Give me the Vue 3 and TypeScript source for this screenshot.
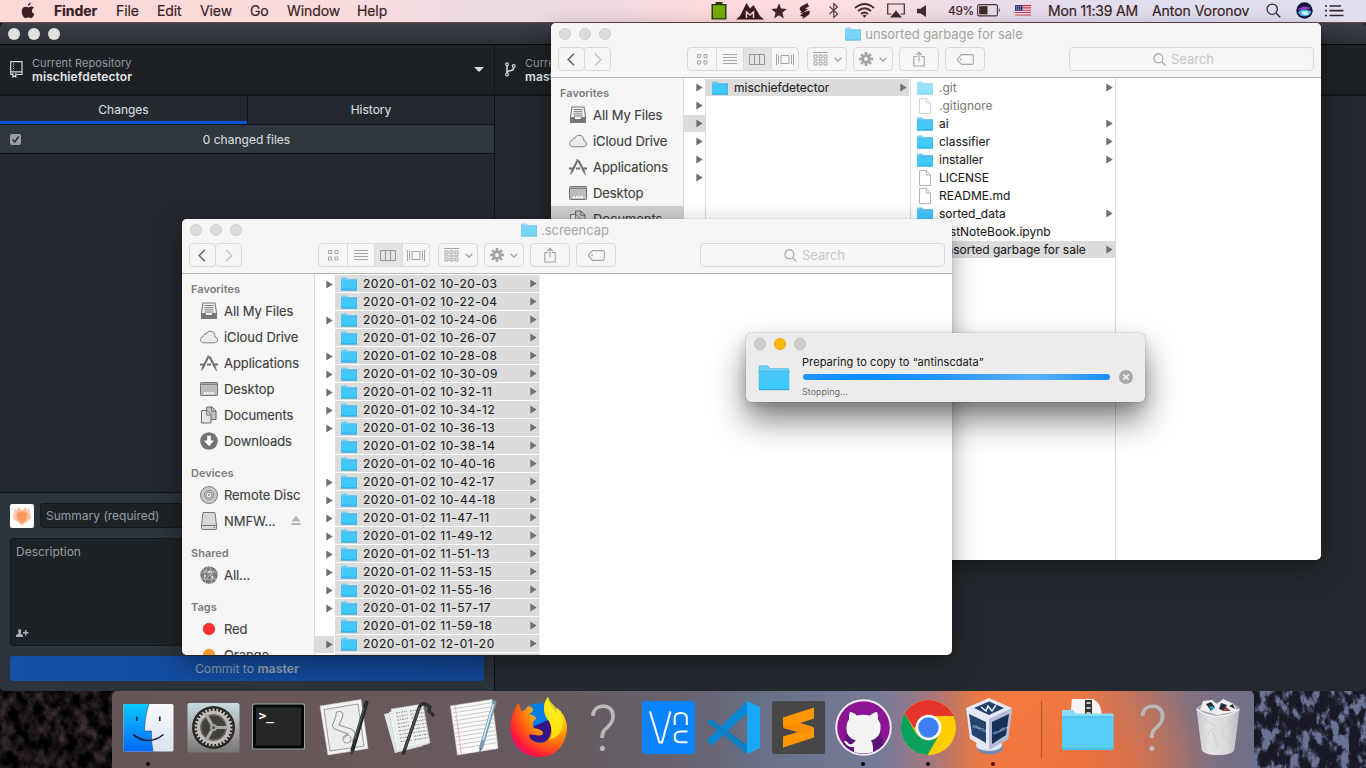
<script setup lang="ts">
type Side = { kind: 'head' | 'item'; label: string; icon?: string; selected?: boolean; eject?: boolean }
type Row = { label?: string; icon?: 'folder' | 'file'; arrow?: boolean; selected?: boolean; dim?: boolean }
type Column = { cls: string; rows: Row[] }
type FinderWindow = { id: string; title: string; side: Side[]; columns: Column[] }

const menus = ['Finder', 'File', 'Edit', 'View', 'Go', 'Window', 'Help']

const sidebar = (selected: string): Side[] => [
  { kind: 'head', label: 'Favorites' },
  { kind: 'item', label: 'All My Files', icon: 'allfiles' },
  { kind: 'item', label: 'iCloud Drive', icon: 'cloud' },
  { kind: 'item', label: 'Applications', icon: 'apps' },
  { kind: 'item', label: 'Desktop', icon: 'desktop' },
  { kind: 'item', label: 'Documents', icon: 'docs', selected: selected === 'Documents' },
  { kind: 'item', label: 'Downloads', icon: 'downloads' },
  { kind: 'head', label: 'Devices' },
  { kind: 'item', label: 'Remote Disc', icon: 'disc' },
  { kind: 'item', label: 'NMFW...', icon: 'drive', eject: true },
  { kind: 'head', label: 'Shared' },
  { kind: 'item', label: 'All...', icon: 'globe' },
  { kind: 'head', label: 'Tags' },
  { kind: 'item', label: 'Red', icon: 'red' },
  { kind: 'item', label: 'Orange', icon: 'orange' },
]

const stamps = [
  '10-20-03', '10-22-04', '10-24-06', '10-26-07', '10-28-08', '10-30-09', '10-32-11',
  '10-34-12', '10-36-13', '10-38-14', '10-40-16', '10-42-17', '10-44-18', '11-47-11',
  '11-49-12', '11-51-13', '11-53-15', '11-55-16', '11-57-17', '11-59-18', '12-01-20',
]
const arrowRows = [0, 2, 4, 5, 6, 7, 8, 11, 12, 13, 14, 15, 16, 17, 18, 20]

const windows: FinderWindow[] = [
  {
    id: 'back',
    title: 'unsorted garbage for sale',
    side: sidebar('Documents'),
    columns: [
      { cls: 'sliver', rows: [0, 1, 2, 3, 4, 5].map((i) => ({ arrow: true, selected: i === 2 })) },
      { cls: 'mid', rows: [{ label: 'mischiefdetector', icon: 'folder', arrow: true, selected: true }] },
      {
        cls: 'wide',
        rows: [
          { label: '.git', icon: 'folder', arrow: true, dim: true },
          { label: '.gitignore', icon: 'file', dim: true },
          { label: 'ai', icon: 'folder', arrow: true },
          { label: 'classifier', icon: 'folder', arrow: true },
          { label: 'installer', icon: 'folder', arrow: true },
          { label: 'LICENSE', icon: 'file' },
          { label: 'README.md', icon: 'file' },
          { label: 'sorted_data', icon: 'folder', arrow: true },
          { label: 'testNoteBook.ipynb', icon: 'file' },
          { label: 'unsorted garbage for sale', icon: 'folder', arrow: true, selected: true },
        ],
      },
    ],
  },
  {
    id: 'front',
    title: '.screencap',
    side: sidebar(''),
    columns: [
      { cls: 'sliver low', rows: stamps.map((_, i) => ({ arrow: arrowRows.includes(i), selected: i === 20 })) },
      {
        cls: 'mid',
        rows: [
          ...stamps.map((s) => ({ label: `2020-01-02 ${s}`, icon: 'folder' as const, arrow: true, selected: true })),
          { icon: 'folder', selected: true },
        ],
      },
    ],
  },
]

const teeth = Array.from({ length: 30 }, (_, i) => i * 12)
const cogs = Array.from({ length: 8 }, (_, i) => i * 45)
const ruled = Array.from({ length: 11 }, (_, i) => i * 4)
</script>

<template>
  <div class="desktop">
    <svg class="defs" width="0" height="0">
      <defs>
        <linearGradient id="gf" x1="0" y1="0" x2="0" y2="1"><stop offset="0" stop-color="#4bc6f8" /><stop offset="1" stop-color="#3bcaff" /></linearGradient>
        <symbol id="folder" viewBox="0 0 16 14">
          <path d="M0 1.2 Q0 .4 .8 .4 H5.4 L6.8 1.9 H16 V13 H0Z" fill="#6fcdf2" />
          <path d="M0 3 H16 V13.4 H0Z" fill="url(#gf)" />
          <path d="M0 3.2H16" stroke="#4fb4e0" stroke-width=".6" />
          <path d="M0 13H16" stroke="#2ba3d4" stroke-width="1" />
          <path d="M15.7 3V13" stroke="#35aede" stroke-width=".6" />
        </symbol>
        <symbol id="file" viewBox="0 0 16 16">
          <path d="M2.5 .5H9.5L13.5 4.8V15.5H2.5Z" fill="#fff" stroke="#b4b4b4" />
          <path d="M9.3 .6V5H13.4" fill="#f4f4f4" stroke="#b4b4b4" />
        </symbol>
        <symbol id="allfiles" viewBox="0 0 18 18">
          <path d="M3 1H15L16.5 11V16.5H1.500V11Z" fill="#f3f3f3" stroke="#777" stroke-width="1.1" />
          <path d="M4.500 3.500H13.500M4.500 5.700H13.500M4.500 7.900H13.500M4.500 10H13.500" stroke="#777" />
          <path d="M1.500 11H5.500L6.500 13H11.500L12.500 11H16.500V16.500H1.500Z" fill="#777" />
        </symbol>
        <symbol id="cloud" viewBox="0 0 18 18">
          <path d="M4.200 14.800H14.200C16.200 14.800 17.500 13.500 17.500 11.800 17.500 10.200 16.400 9.100 15 8.900 15.100 5.700 13 3.200 10.200 3.200 8.100 3.200 6.500 4.500 5.800 6.300 4.400 6 3.100 7 3.100 8.600 1.500 8.900 .5 10.200 .5 11.700 .5 13.500 2 14.800 4.200 14.800Z" fill="#ebebeb" stroke="#7c7c7c" />
        </symbol>
        <symbol id="apps" viewBox="0 0 18 18">
          <path d="M8.200 3L2.500 14.500M9.700 3L15.500 14.500" stroke="#6e6e6e" stroke-width="2" />
          <path d="M7.500 1.500L10.500 4" stroke="#6e6e6e" stroke-width="1.500" />
          <path d="M0 10.500H5M7 10.500H11M13.500 10.500H18" stroke="#6e6e6e" stroke-width="1.800" />
          <path d="M2.300 14.500L1.500 16.500M15.500 14.500L16.500 16.700" stroke="#6e6e6e" stroke-width="1.200" />
        </symbol>
        <symbol id="desktop" viewBox="0 0 18 18">
          <rect x=".5" y="2.500" width="17" height="13" rx=".8" fill="#bcbcbc" stroke="#747474" />
          <path d="M1 4.300H17" stroke="#747474" /><path d="M4 13.300H14" stroke="#fff" stroke-width="2" stroke-dasharray="2 .7" />
        </symbol>
        <symbol id="docs" viewBox="0 0 18 18">
          <path d="M6.500 1H12L16 5V13.500H6.500Z" fill="#c2c2c2" stroke="#6c6c6c" /><path d="M11.700 1V5.300H16" fill="none" stroke="#6c6c6c" />
          <path d="M1.500 4.500H7L11 8.700V17H1.500Z" fill="#e5e5e5" stroke="#6c6c6c" /><path d="M6.700 4.500V9H11" fill="none" stroke="#6c6c6c" />
        </symbol>
        <symbol id="downloads" viewBox="0 0 18 18">
          <circle cx="9" cy="9" r="8.800" fill="#727272" /><path d="M7.200 3.700H10.800V8.500H14L9 14.200L4 8.500H7.200Z" fill="#fff" />
        </symbol>
        <symbol id="disc" viewBox="0 0 18 18">
          <circle cx="9" cy="9" r="8.500" fill="#c9c9c9" stroke="#7b7b7b" /><circle cx="9" cy="9" r="4.800" fill="none" stroke="#959595" /><circle cx="9" cy="9" r="3" fill="#eee" stroke="#858585" /><circle cx="9" cy="9" r="1" fill="#888" />
        </symbol>
        <symbol id="drive" viewBox="0 0 18 18">
          <path d="M3 .5H15L16.500 13V16.500Q16.500 17.500 15.500 17.500H2.500Q1.500 17.500 1.500 16.500V13Z" fill="#d8d8d8" stroke="#777" /><path d="M1.700 13.500H16.300" stroke="#777" /><circle cx="14.300" cy="15.500" r=".7" fill="#666" />
        </symbol>
        <symbol id="globe" viewBox="0 0 18 18">
          <circle cx="9" cy="9" r="8.700" fill="#777" /><path d="M1.500 7Q9 3 16.500 7M1.500 12Q8 15 16 12M9.500 .5Q14 8 11 17M8 .5Q2 8 6 17M3 3L15 14M15 4L6 13" fill="none" stroke="#d0d0d0" stroke-width=".7" />
          <circle cx="9.500" cy="6" r="1.200" fill="#eee" /><circle cx="5" cy="10" r="1" fill="#eee" /><circle cx="12.500" cy="11" r="1" fill="#eee" />
        </symbol>
        <symbol id="red" viewBox="0 0 18 18"><circle cx="9" cy="9" r="5.800" fill="#ff3032" stroke="#df2326" stroke-width=".7" /></symbol>
        <symbol id="orange" viewBox="0 0 18 18"><circle cx="9" cy="9" r="5.800" fill="#ff9d2c" stroke="#e5861f" stroke-width=".7" /></symbol>
        <symbol id="glass" viewBox="0 0 14 14"><circle cx="5.800" cy="5.800" r="4.800" fill="none" stroke="currentColor" stroke-width="1.200" /><path d="M9.300 9.300L13.300 13.300" stroke="currentColor" stroke-width="1.400" /></symbol>
        <filter id="rockL" x="0" y="0" width="100%" height="100%" color-interpolation-filters="sRGB">
          <feTurbulence type="fractalNoise" baseFrequency=".09 .07" numOctaves="4" seed="7" />
          <feColorMatrix values=".55 0 0 0 -.19  .42 0 0 0 -.145  .42 0 0 0 -.14  0 0 0 0 1" />
        </filter>
        <filter id="rockR" x="0" y="0" width="100%" height="100%" color-interpolation-filters="sRGB">
          <feTurbulence type="fractalNoise" baseFrequency=".1 .06" numOctaves="5" seed="12" />
          <feColorMatrix values="5 0 0 0 -2.200  5 0 0 0 -2.200  5 0 0 0 -2.200  0 0 0 0 1" />
          <feComponentTransfer>
            <feFuncR type="table" tableValues=".1 .14 .28 .42" /><feFuncG type="table" tableValues=".1 .15 .3 .45" /><feFuncB type="table" tableValues=".15 .21 .4 .58" />
          </feComponentTransfer>
        </filter>
      </defs>
    </svg>

    <svg class="wallpaper" viewBox="0 0 1366 88">
      <rect width="1366" height="88" fill="#17161d" />
      <rect width="130" height="88" filter="url(#rockL)" />
      <rect x="1240" width="126" height="88" filter="url(#rockR)" />
    </svg>

    <header class="menubar">
      <svg class="apple" viewBox="0 0 14 17"><path d="M9.700 .5C9.800 2.300 8.400 3.900 6.900 3.900 6.700 2.300 8.100 .8 9.700 .5ZM12.900 5.700C11.500 6.500 10.900 7.600 11 8.900 11.100 10.400 12 11.500 13.300 12 12.700 13.900 11.300 16.200 9.900 16.200 8.900 16.200 8.500 15.600 7.300 15.600 6.100 15.600 5.600 16.200 4.700 16.200 2.900 16.200 .7 12.700 .7 9.500 .7 6.500 2.500 4.700 4.500 4.700 5.700 4.700 6.500 5.400 7.300 5.400 8.100 5.400 9 4.600 10.500 4.600 11.500 4.600 12.400 5 12.900 5.700Z" fill="#3b2022" /></svg>
      <nav class="menus"><span v-for="m in menus" :key="m">{{ m }}</span></nav>
      <div class="status">
        <svg width="16" height="18" viewBox="0 0 16 18"><path d="M4.500 0H11.500V2H15.500V17.500H.5V2H4.500Z" fill="#25370a" /><rect x="2" y="3.300" width="12" height="13" fill="#76ad00" /></svg>
        <svg width="28" height="18" viewBox="0 0 28 18"><path d="M0 17.500L4 14 10.500 1 14 6.500 17.500 3 24 14 28 17.500Z" fill="#3a1a1c" /><path d="M10.500 16V10L14 13 17.500 10V16" fill="none" stroke="#f5d5d5" stroke-width="1.500" /></svg>
        <svg width="16" height="16" viewBox="0 0 16 16"><path d="M8 .3L10.100 5.600 15.800 6 11.400 9.700 12.900 15.400 8 12.200 3.100 15.400 4.600 9.700 .2 6 5.900 5.600Z" fill="#402628" /></svg>
        <svg width="13" height="16" viewBox="0 0 13 16"><path d="M9.500 0L3 3.500Q0 6 3.500 8.500L2 10.500 6 9 10 6 7 5.500 11 3.500ZM5 9.500L11.500 7.500Q12.500 11 9 13L4.500 16 5 13.500 2 13Z" fill="#3b2022" /></svg>
        <svg width="12" height="17" viewBox="0 0 12 17"><path d="M1.500 4.500L9.500 12 5.800 15.500V1.500L9.500 5 1.500 12" fill="none" stroke="#50383b" stroke-width="1.100" /></svg>
        <svg width="21" height="15" viewBox="0 0 21 15"><path d="M1 5Q10.500 -3 20 5M4 8Q10.500 2.500 17 8M7 11Q10.500 8 14 11" fill="none" stroke="#402a2d" stroke-width="1.800" /><path d="M8.500 12.500L10.500 14.800 12.500 12.500Q10.500 11 8.500 12.500" fill="#402a2d" /></svg>
        <svg width="18" height="15" viewBox="0 0 18 15"><path d="M4.500 11H.7V1H17.300V11H13.500" fill="none" stroke="#402a2d" stroke-width="1.200" /><path d="M9 7.500L15 14.500H3Z" fill="#402a2d" /></svg>
        <svg width="10" height="12" viewBox="0 0 10 12"><path d="M0 3.800H3.500L9 0V12L3.500 8.200H0Z" fill="#402a2d" /></svg>
        <span class="pct">49%</span>
        <svg width="24" height="13" viewBox="0 0 24 13"><rect x=".6" y=".6" width="19.800" height="11.300" rx="1.500" fill="none" stroke="#493436" stroke-width="1.100" /><rect x="2.200" y="2.200" width="8.300" height="8.100" fill="#3e292b" /><path d="M21.800 4Q23.800 6.200 21.800 8.500" fill="#493436" /></svg>
        <svg width="16" height="11" viewBox="0 0 16 11"><rect width="16" height="11" fill="#f6eef2" /><path d="M0 .6H16M0 2.900H16M0 5.200H16M0 7.500H16M0 10H16" stroke="#c92842" stroke-width="1.100" /><rect width="7.500" height="5.800" fill="#3a3d78" /><path d="M1 1.500H7M1 3H7M1 4.500H7" stroke="#c9cae0" stroke-width=".6" stroke-dasharray="1 1" /></svg>
        <span class="clock">Mon 11:39 AM</span>
        <span class="user">Anton Voronov</span>
        <svg width="15" height="15" class="mag"><use href="#glass" /></svg>
        <svg width="17" height="17" viewBox="0 0 17 17"><circle cx="8.500" cy="8.500" r="8.200" fill="#17153e" /><path d="M1.500 8Q7 2 15 6 11 8 8 7.500 5 7.500 1.500 8" fill="#a23ccb" /><path d="M2 10.500Q5 5.500 15 9 15.500 12 11 14 5 15.500 2 10.500" fill="#3fb5ef" /><path d="M5 10Q9 7.500 13.500 11 10 15 6.500 12Z" fill="#d7f2fb" /></svg>
        <svg width="19" height="12" viewBox="0 0 19 12"><path d="M0 1H2M0 5.700H2M0 10.500H2M4.500 1H16M4.500 5.700H18.500M4.500 10.500H18.500" stroke="#35272d" stroke-width="1.700" /></svg>
      </div>
    </header>

    <section class="gh">
      <div class="gh-title"><i /><i /><i /></div>
      <div class="gh-tools">
        <div class="gh-repo">
          <svg width="13" height="17" viewBox="0 0 13 17"><path d="M2.500 13.500H.7V.7H12V13.500H6.500M.7 10.800H12M2.800 12V16L4.300 14.800 5.800 16V12" fill="none" stroke="#d4d8dc" stroke-width="1.200" /><path d="M3.500 2.500V9.500" stroke="#d4d8dc" stroke-dasharray="1 1.200" /></svg>
          <div class="gh-lines"><span>Current Repository</span><b>mischiefdetector</b></div>
          <svg class="caret" width="10" height="5" viewBox="0 0 10 5"><path d="M0 0H10L5 5Z" fill="#d8dde2" /></svg>
        </div>
        <div class="gh-branch">
          <svg width="11" height="15" viewBox="0 0 11 15"><g fill="none" stroke="#cdd2d7" stroke-width="1.200"><circle cx="2" cy="2.300" r="1.400" /><circle cx="2" cy="12.500" r="1.400" /><circle cx="8.700" cy="4" r="1.400" /><path d="M2 4V11M8.700 5.500Q8.700 8.500 4.500 8.800 2 9.500 2 11" stroke-width="1.600" /></g></svg>
          <div class="gh-lines"><span>Current Branch</span><b>master</b></div>
        </div>
      </div>
      <div class="gh-body">
        <div class="gh-left">
          <div class="gh-tabs"><span class="on">Changes</span><span>History</span></div>
          <div class="gh-count">
            <svg width="11" height="11" viewBox="0 0 11 11"><rect width="11" height="11" rx="2" fill="#9b9fa3" /><path d="M2.500 5.500L4.700 8 8.700 2.500" fill="none" stroke="#252a30" stroke-width="1.500" /></svg>
            <span>0 changed files</span>
          </div>
          <div class="gh-space" />
          <div class="gh-commit">
            <div class="gh-summary">
              <svg width="24" height="24" viewBox="0 0 24 24"><rect width="24" height="24" rx="2" fill="#fff" /><path d="M5 4L9.500 9 6 18 2.500 13ZM19 4L14.500 9 18 18 21.500 13Z" fill="#fbd0b8" /><path d="M8.500 3L12 7 15.500 3 18.500 10 20 15 12 21.500 4 15 5.500 10Z" fill="#fcbf9c" /><path d="M6.500 9.500L12 7 17.500 9.500 16 16 12 19.500 8 16Z" fill="#fb9b62" /></svg>
              <div class="gh-input">Summary (required)</div>
            </div>
            <div class="gh-desc">
              <span>Description</span>
              <svg width="13" height="8" viewBox="0 0 13 8"><path d="M3.500 0Q5.500 0 5.300 2.500 5 4 4.500 4.500L7 6V8H0V6L2.500 4.500Q1.500 0 3.500 0Z" fill="#a7b0b8" /><path d="M9.700 1V6.600M7 3.800H12.500" stroke="#a7b0b8" stroke-width="1.500" /></svg>
            </div>
            <div class="gh-button">Commit to&nbsp;<b>master</b></div>
          </div>
        </div>
        <div class="gh-right" />
      </div>
    </section>

    <section v-for="w in windows" :key="w.id" class="finder" :class="w.id">
      <div class="f-title"><div class="lights"><i /><i /><i /></div><svg width="16" height="14"><use href="#folder" /></svg><span>{{ w.title }}</span></div>
      <div class="f-tools">
        <div class="nav">
          <span><svg width="8" height="13" viewBox="0 0 8 13"><path d="M7 .8L1.200 6.500 7 12.200" fill="none" stroke="#666" stroke-width="1.500" /></svg></span>
          <span><svg width="8" height="13" viewBox="0 0 8 13"><path d="M1 .8L6.800 6.500 1 12.200" fill="none" stroke="#c4c4c4" stroke-width="1.400" /></svg></span>
        </div>
        <div class="views">
          <span><svg width="12" height="12" viewBox="0 0 12 12"><path d="M1.500 1.500H4.500V4.500H1.500ZM8 1.500H11V4.500H8ZM1.500 8H4.500V11H1.500ZM8 8H11V11H8Z" fill="none" stroke="#a5a5a5" /></svg></span>
          <span><svg width="14" height="12" viewBox="0 0 14 12"><path d="M0 1.500H14M0 4.500H14M0 7.500H14M0 10.500H14" stroke="#a5a5a5" /></svg></span>
          <span class="on"><svg width="16" height="11" viewBox="0 0 16 11"><path d="M.5 .5H15.500V10.500H.5ZM5.500 .5V10.500M10.500 .5V10.500" fill="none" stroke="#969696" /></svg></span>
          <span><svg width="18" height="11" viewBox="0 0 18 11"><path d="M5 1.500H13V9.500H5ZM.5 0V11M2.500 1V10M17.500 0V11M15.500 1V10" fill="none" stroke="#a5a5a5" /></svg></span>
        </div>
        <div class="btn arrange"><svg width="15" height="14" viewBox="0 0 15 14"><path d="M0 .5H15M0 8H15" stroke="#a5a5a5" /><path d="M1 3H4V6H1ZM6 3H9V6H6ZM11 3H14V6H11ZM1 10H4V13H1ZM6 10H9V13H6ZM11 10H14V13H11Z" fill="none" stroke="#a5a5a5" /></svg><svg width="8" height="5" viewBox="0 0 8 5"><path d="M.7 .7L4 4.200 7.300 .7" fill="none" stroke="#a5a5a5" stroke-width="1.300" /></svg></div>
        <div class="btn gear"><svg width="14" height="14" viewBox="0 0 14 14"><circle cx="7" cy="7" r="4.700" fill="#a5a5a5" /><g fill="#a5a5a5"><rect v-for="c in cogs" :key="c" x="5.700" y="0" width="2.600" height="4" :transform="`rotate(${c} 7 7)`" /></g><circle cx="7" cy="7" r="1.900" fill="#f6f6f6" /></svg><svg width="8" height="5" viewBox="0 0 8 5"><path d="M.7 .7L4 4.200 7.300 .7" fill="none" stroke="#a5a5a5" stroke-width="1.300" /></svg></div>
        <div class="btn"><svg width="12" height="17" viewBox="0 0 12 17"><path d="M4 5.500H.8V15H11.200V5.500H8M6 10.500V1.500M3.200 4L6 1.200 8.800 4" fill="none" stroke="#a5a5a5" stroke-width="1.100" /></svg></div>
        <div class="btn"><svg width="17" height="11" viewBox="0 0 17 11"><path d="M4.500 .6H15Q16.300 .6 16.300 2V9Q16.300 10.400 15 10.400H4.500L.8 6.500Q.4 5.500 .8 4.500Z" fill="none" stroke="#a5a5a5" stroke-width="1.100" /><circle cx="4" cy="5.500" r=".9" fill="#a5a5a5" /></svg></div>
        <div class="search"><svg width="13" height="13"><use href="#glass" /></svg><span>Search</span></div>
      </div>
      <div class="f-body">
        <aside>
          <div v-for="s in w.side" :key="s.label" :class="[s.kind, { sel: s.selected }]">
            <svg v-if="s.icon" width="18" height="18"><use :href="`#${s.icon}`" /></svg><span>{{ s.label }}</span>
            <svg v-if="s.eject" class="eject" width="10" height="10" viewBox="0 0 10 10"><path d="M5 0L10 5.500H0ZM.5 7H9.500V9H.5Z" fill="#b4b4b4" /></svg>
          </div>
        </aside>
        <div v-for="(c, ci) in w.columns" :key="ci" class="col" :class="c.cls">
          <div v-for="(r, ri) in c.rows" :key="ri" class="row" :class="{ sel: r.selected, dim: r.dim }">
            <svg v-if="r.icon === 'folder'" class="ic" width="16" height="14"><use href="#folder" /></svg>
            <svg v-else-if="r.icon === 'file'" class="ic" width="16" height="16"><use href="#file" /></svg>
            <span v-if="r.label" class="name">{{ r.label }}</span>
            <svg v-if="r.arrow" class="tri" width="7" height="9" viewBox="0 0 7 9"><path d="M.3 .4L6.700 4.500 .3 8.600Z" fill="#707070" /></svg>
          </div>
        </div>
      </div>
    </section>

    <section class="copy">
      <div class="lights"><i /><i class="amber" /><i /></div>
      <div class="copy-main">
        <svg class="big" width="32" height="27" viewBox="0 0 32 27"><path d="M1 2Q1 .7 2.300 .7H9.500L12 3.500H30Q31 3.500 31 4.500V8H1Z" fill="#6fd0f5" stroke="#4cb5e1" stroke-width=".6" /><path d="M1 6H31V24.500H1Z" fill="url(#gf)" stroke="#35aede" stroke-width=".5" /><path d="M1 24.700H31" stroke="#299fce" /></svg>
        <div class="copy-text"><span class="t">Preparing to copy to “antinscdata”</span><div class="bar" /><span class="s">Stopping...</span></div>
        <svg class="x" width="14" height="14" viewBox="0 0 14 14"><circle cx="7" cy="7" r="7" fill="#a9a9a9" /><path d="M4.300 4.300L9.700 9.700M9.700 4.300L4.300 9.700" stroke="#f1f1f1" stroke-width="1.700" /></svg>
      </div>
    </section>

    <footer class="dock">
      <svg viewBox="116 691 65 77">
        <defs><linearGradient id="fb" x1="0" y1="0" x2="0" y2="1"><stop offset="0" stop-color="#0bc9fb" /><stop offset="1" stop-color="#0569fb" /></linearGradient><linearGradient id="fw" x1="0" y1="0" x2="0" y2="1"><stop offset="0" stop-color="#fafafc" /><stop offset="1" stop-color="#d9e2ef" /></linearGradient></defs>
        <rect x="123.500" y="704" width="50" height="47.500" rx="1.500" fill="url(#fw)" />
        <path d="M123.500 705.500Q123.500 704 125 704H149Q145 715 144.500 731H151.500Q151 741 153 751.500H125Q123.500 751.500 123.500 750Z" fill="url(#fb)" />
        <path d="M149 704Q145 715 144.500 731H151.500Q151 741 153 751.500" fill="none" stroke="#33517e" stroke-width=".6" />
        <path d="M136.800 716.500V721M159.800 716.500V721" stroke="#15293f" stroke-width="1.700" /><path d="M133 734.500Q148.500 746.500 163.500 734.500" fill="none" stroke="#12233a" stroke-width="1.600" /><circle cx="148" cy="764" r="2" fill="#0c0909" />
      </svg>
      <svg viewBox="181 691 65 77">
        <defs><linearGradient id="sg" x1="0" y1="0" x2="0" y2="1"><stop offset="0" stop-color="#c5dce3" /><stop offset=".5" stop-color="#aaa9a9" /><stop offset="1" stop-color="#797775" /></linearGradient></defs>
        <rect x="187.500" y="703" width="52" height="49.500" rx="2" fill="url(#sg)" /><circle cx="213.500" cy="727.500" r="21.500" fill="#292827" />
        <g stroke="#c9c7c2" stroke-width="1.800"><path v-for="t in teeth" :key="t" d="M213.500 708.500V712" :transform="`rotate(${t} 213.500 727.500)`" /></g>
        <circle cx="213.500" cy="727.500" r="15" fill="#42403e" stroke="#bebbb5" stroke-width="3.500" /><circle cx="213.500" cy="727.500" r="12.500" fill="none" stroke="#777470" />
        <path d="M213.500 727.500L206 714.500M213.500 727.500H228M213.500 727.500L206 740.500" stroke="#aaa8a2" stroke-width="3.200" /><circle cx="213.500" cy="727.500" r="3.500" fill="#a09e99" /><circle cx="213.500" cy="727.500" r="1.500" fill="#5b5955" />
      </svg>
      <svg viewBox="246 691 65 77"><rect x="252" y="703.500" width="53" height="46" rx="2" fill="#92a8ab" /><rect x="253" y="704.500" width="51" height="44" rx="1.500" fill="#070707" /><rect x="256" y="707.500" width="45" height="38" fill="#252626" /><text x="258.500" y="719.500" fill="#fff" class="mono">&gt;_</text></svg>
      <svg viewBox="311 691 65 77">
        <path d="M320 706L361 699.500 368 748.500 328 755Z" fill="#f3f3f3" stroke="#d6d6d6" stroke-width=".5" /><path d="M324 709.500L358 704 364 746 330 751Z" fill="#ededed" stroke="#777" stroke-width=".7" />
        <g fill="none" stroke="#9c9c9c" stroke-width="1.100"><path d="M336 716Q335 711 340 711.500 344 712 342.500 717L339 725 351 729Q355 731 355 735L352 742" /><path d="M336 716L332.500 725Q332.500 728 336 729.500L348 734 344 738" /><circle cx="347" cy="739" r="4" /></g>
        <path d="M366.500 702.500L352.500 750" stroke="#26292d" stroke-width="4" stroke-linecap="round" /><path d="M353 749L351.500 754.500" stroke="#303338" stroke-width="1.500" /><path d="M364 708L355 739" stroke="#616970" stroke-width="1" />
      </svg>
      <svg viewBox="376 691 65 77">
        <path d="M384 714L415 708 423 746 395 753Z" fill="#e2e6e8" /><path d="M389 712L421 705 428 744 397 751Z" fill="#f3f5f5" stroke="#bec4c7" stroke-width=".5" /><path d="M391 709L423 704 430 743 400 749Z" fill="#eef0ef" stroke="#ccd1d2" stroke-width=".5" />
        <g stroke="#858987" stroke-width="1" stroke-dasharray="2 1 1 1"><path v-for="r in ruled.slice(0, 9)" :key="r" :d="`M${396 + r * .14} ${713 + r * .9}l11 -1.800M${410 + r * .14} ${711 + r * .9}l14 -2.200`" /></g>
        <path d="M403 754.500L419 708Q422 700 430 707L429 711 434 716" fill="none" stroke="#303030" stroke-width="3.300" /><path d="M405 748L419.500 707" stroke="#666" stroke-width=".8" />
      </svg>
      <svg viewBox="441 691 65 77">
        <path d="M450.500 706L492 699.500 498 748.500 457.500 755Z" fill="#fbfbf9" stroke="#ddd" stroke-width=".5" /><g stroke="#aeb4b6" stroke-width=".7"><path v-for="r in ruled" :key="r" :d="`M${452 + r * .13} ${709 + r}l41 -6.500`" /></g><path d="M455 705.500L461.500 754" stroke="#f5b1aa" stroke-width="1" />
        <path d="M494.500 702.500L481 748" stroke="#789cb3" stroke-width="4" stroke-linecap="round" /><path d="M493.500 704L483 740" stroke="#d6e9f3" stroke-width="1.500" /><path d="M481 748L479 754.500" stroke="#686f75" stroke-width="1.400" />
      </svg>
      <svg viewBox="506 691 65 77">
        <defs><radialGradient id="fx" cx=".8" cy=".15" r="1"><stop offset="0" stop-color="#fff42b" /><stop offset=".4" stop-color="#ffb400" /><stop offset=".65" stop-color="#ff6410" /><stop offset=".88" stop-color="#ff173a" /><stop offset="1" stop-color="#ee0b94" /></radialGradient></defs>
        <circle cx="540" cy="726" r="23" fill="#087ee8" /><path d="M523 726A18 18 0 0 0 554 737L555 717 530 728Z" fill="#351587" />
        <path d="M519 703C515 706 510 717 510.500 729 512 748 525 757 540 757 556 757 567 744 567 727 567 720 562 711 557 708 557 710 557 712 556.500 714 553 708 549 705 548 697 541 706 544 716 549 721 554 731 550 742 541 743 534 743 529 739 529 735 534 733 538 738 543 734 544 730 538 729 534 728 531 724 534 721 536 718 535 716 532 715 529 714 534 712 535 707 528 706 526 709 524 711 521 711 519 708 519 703Z" fill="url(#fx)" />
        <path d="M548 697C541 706 545 716 549 721 553 728 553 736 549 740 560 737 566 727 561 715 558 707 550 704 548 697Z" fill="#ffed16" opacity=".8" />
      </svg>
      <svg viewBox="571 691 65 77"><text x="603" y="751" class="huge">?</text></svg>
      <svg viewBox="636 691 65 77"><rect x="642" y="701" width="53" height="53" rx="3" fill="#0983ff" /><path d="M650 711.500L659.500 742.500H662L670.500 711.500M674.700 725V718Q674.700 713 680.800 713 686.800 713 686.800 718V725M687.500 731.500H680.500Q674.700 731.500 674.700 737 674.700 742.300 680.500 742.300H687.500" fill="none" stroke="#fff" stroke-width="2.100" /></svg>
      <svg viewBox="701 691 65 77"><path d="M707 722L712 719.500 747 745V754Z" fill="#057bc3" /><path d="M707 740L712 745.500 747 713V701Z" fill="#0887d5" /><path d="M707 722Q709 719 712 719.800L747 747V754Z" fill="#127fc0" /><path d="M747 701L760 707V748L747 754Z" fill="#19a7f8" /></svg>
      <svg viewBox="766 691 65 77"><rect x="772" y="701" width="53" height="53" rx="2" fill="#474747" /><path d="M783 717.500L814 707.500V718.500L800 723 812 726.500Q814 727 814 729V737.500L783 747.500V736.500L798 732 785 728.500Q783 728 783 726Z" fill="#ff9800" /><path d="M783 726Q783 728 785 728.500L798 732 807 735 814 729 800 723Z" fill="#f58700" opacity=".6" /></svg>
      <svg viewBox="831 691 65 77"><circle cx="863.500" cy="727.500" r="28.300" fill="#efedf2" /><circle cx="863.500" cy="727.500" r="26.300" fill="#8a1494" /><path d="M843 744A26 26 0 0 0 884 744L879 730H848Z" fill="#5b147a" /><path d="M850 712Q853 712 857 715.500 863.500 714 870 715.500 874 712 877 712 878.500 715 878 719.500 881 723 880.500 729 880 738 871 740.500 873 743 873 747V752Q864 755 854 752V747Q847 748 844 741 846 740 849 744 852 745 854 742.500 855 741 856 740.500 846.500 738 846.500 729 846.500 722 849 719.500 848.500 715 850 712Z" fill="#f4f3f5" /><circle cx="863" cy="764" r="2" fill="#08080d" /></svg>
      <svg viewBox="896 691 65 77"><circle cx="928.500" cy="727.500" r="27.500" fill="#ffcd04" /><path d="M904.700 713.700A27.500 27.500 0 0 1 952.300 713.700Q953.500 715 953.800 716H928L914 728Z" fill="#e4342b" /><path d="M904.700 713.700L916.500 734 928.500 740 938 737 927.500 755A27.500 27.500 0 0 1 904.700 713.700Z" fill="#0ba05e" /><circle cx="928.500" cy="727.500" r="12.800" fill="#fff" /><circle cx="928.500" cy="727.500" r="10.300" fill="#3f7ff5" /><circle cx="928" cy="764" r="2" fill="#0d090d" /></svg>
      <svg viewBox="961 691 65 77">
        <ellipse cx="990" cy="748" rx="13" ry="6.500" fill="#7786ae" /><ellipse cx="989" cy="745" rx="13" ry="6" fill="#dfe6f6" /><path d="M966 708L989 698 1012 708 1008 739 989 750 970 739Z" fill="#e5e9f5" /><path d="M989 719L1012 708 1008 739 989 750Z" fill="#b2bad5" /><path d="M974 708L989 701.500 1004 708 989 715Z" fill="#203f6a" /><path d="M969 714L986 722V743L972 735Z" fill="#24446f" /><path d="M992 722L1009 714 1006 735 992 744Z" fill="#182f57" /><path d="M981 707L986 711 988 706 992 711 996 705" fill="none" stroke="#e9eefb" stroke-width="1.500" /><text x="971.500" y="727" transform="rotate(22 972 729)" class="tiny">ORACLE</text><text x="993" y="735" transform="rotate(-24 993 735)" class="tiny">VirtualBox</text><circle cx="993" cy="764" r="2" fill="#57110c" />
      </svg>
      <i class="sep" />
      <svg viewBox="1055 691 65 77"><path d="M1072 699H1093Q1102 703 1102 718H1070Z" fill="#f4f4f4" /><path d="M1085 700H1092V718H1085Z" fill="#333" /><path d="M1086.500 703H1090.500M1086.500 708H1090.500M1086.500 713H1090.500" stroke="#c7c7c7" stroke-width="2" /><path d="M1062 711Q1062 710 1063 710H1073L1076 713.500H1112Q1113.500 713.500 1113.500 715V719H1062Z" fill="#89dcfa" /><rect x="1062" y="716" width="51.500" height="34" rx="1" fill="#58cdfa" /><path d="M1062 717H1113.500" stroke="#4ab5df" stroke-width=".7" /><path d="M1062 748.800H1113.500" stroke="#43aedb" /></svg>
      <svg viewBox="1120 691 65 77"><text x="1152.500" y="751" class="huge">?</text></svg>
      <svg viewBox="1185 691 65 77">
        <defs><linearGradient id="tr"><stop offset="0" stop-color="#c6c5cb" /><stop offset=".3" stop-color="#e4e3e5" /><stop offset=".7" stop-color="#dad8da" /><stop offset="1" stop-color="#bab9c3" /></linearGradient></defs>
        <ellipse cx="1218" cy="709" rx="21.500" ry="6.500" fill="#aaa9b0" /><path d="M1200 710L1203 701 1212 700 1217 704 1223 699 1234 704 1237 711 1218 715Z" fill="#eee" /><path d="M1206 704L1211 702 1215 707 1211 711ZM1221 703L1227 705 1224 711 1219 709ZM1229 706L1233 704 1235 709Z" fill="#272d36" /><path d="M1209 706L1215 707 1212 711Z" fill="#27aac6" /><path d="M1226 707L1231 711H1222Z" fill="#9a4c3c" />
        <path d="M1196.500 709Q1207 717 1218 716 1231 716 1239.500 709L1234.500 749Q1233 755 1218 755 1203 755 1201.500 749Z" fill="url(#tr)" /><path d="M1196.500 709Q1207 717 1218 716 1231 716 1239.500 709" fill="none" stroke="#f6f6f8" stroke-width="1.200" /><path d="M1204 719L1215 726 1206 737M1231 717L1222 734 1231 745M1213 732L1218 748" stroke="#cfcdd0" fill="none" stroke-width="1" />
      </svg>
    </footer>
  </div>
</template>

<style>
html, body { margin: 0; overflow: hidden; background: #15151b; }
</style>

<style scoped>
.desktop { position: relative; width: 1366px; height: 768px; overflow: hidden; font-family: Inter, "Liberation Sans", sans-serif; font-size: 13px; box-sizing: border-box; }
.desktop * { box-sizing: border-box; }
svg { display: block; flex: none; }
.defs { position: absolute; }
.wallpaper { position: absolute; left: 0; bottom: 0; width: 1366px; height: 88px; }
.menubar { position: relative; display: flex; align-items: center; height: 23px; padding-left: 21px; color: #3b2225; font-size: 14px; background: linear-gradient(90deg, #fbd9d8 0, #fbdbdb 300px, #eedbe4 500px, #f2dae3 600px, #ffdcdd 720px, #ffdfe1 850px, #e9dcec 1000px, #dedff0 1180px, #e2e0ef 1366px); border-bottom: 1px solid #74474e; }
.apple { width: 14px; height: 17px; margin-top: -2px; }
.menus { display: grid; grid-template-columns: 62px 41px 43px 50px 37px 70px 40px; margin-left: 19px; margin-top: -1px; width: 657px; letter-spacing: -.1px; -webkit-text-stroke: .2px; }
.menus span:first-child { font-weight: 700; }
.status { display: grid; grid-template-columns: 25px 35px 27px 30px 26px 33px 30px 31px 29px 38px 33px 104px 114px 30px 29px 20px; align-items: center; white-space: nowrap; letter-spacing: -.35px; }
.status > * { margin-bottom: 1px; }
.pct { font-size: 12px; -webkit-text-stroke: .2px; }
.clock, .user { -webkit-text-stroke: .2px; }
.clock { letter-spacing: -.2px; }
.user { letter-spacing: -.05px; }
.mag { color: #3b2c32; }

.gh { position: absolute; left: 0; top: 23px; width: 1366px; height: 668px; border-radius: 5px; overflow: hidden; background: #24292f; display: flex; flex-direction: column; color: #d5dadf; }
.gh-title { height: 22px; display: flex; gap: 8px; padding: 5px 0 0 8px; background: linear-gradient(#3c4047, #2a2e35); border-bottom: 1px solid #060606; flex: none; }
.gh-title i { width: 12px; height: 12px; border-radius: 6px; background: #e0e0df; }
.gh-tools { height: 51px; display: flex; background: #1d2125; border-bottom: 2px solid #141414; flex: none; }
.gh-repo { width: 495px; border-right: 1px solid #111315; display: flex; align-items: center; padding: 0 10px; }
.gh-branch { flex: 1; display: flex; align-items: center; padding-left: 10px; }
.gh-lines { display: flex; flex-direction: column; margin-left: 9px; font-size: 12px; line-height: 13.500px; margin-top: 1px; letter-spacing: .1px; }
.gh-lines span { color: #9198a1; font-size: 11px; letter-spacing: .08px; }
.gh-lines b { color: #e3e7eb; font-weight: 600; }
.caret { margin-left: auto; }
.gh-body { flex: 1; display: flex; }
.gh-left { width: 495px; border-right: 1px solid #111315; display: flex; flex-direction: column; }
.gh-tabs { display: grid; grid-template-columns: 248px 246px; height: 29px; border-bottom: 1px solid #111315; text-align: center; line-height: 28px; font-size: 12px; -webkit-text-stroke: .15px; }
.gh-tabs .on { border-right: 1px solid #111315; box-shadow: inset 0 -3px #0453d9; }
.gh-count { height: 29px; display: flex; align-items: center; padding-left: 10px; background: #2f363d; border-bottom: 1px solid #111315; font-size: 12px; -webkit-text-stroke: .15px; }
.gh-count span { flex: 1; text-align: center; padding-right: 22px; }
.gh-space { flex: 1; }
.gh-commit { height: 199px; border-top: 1px solid #111315; background: #2b333b; padding: 10px; }
.gh-summary { display: flex; align-items: center; gap: 6px; }
.gh-input { flex: 1; height: 25px; line-height: 24px; padding-left: 5px; border: 1px solid #15181b; border-radius: 3px; background: #1d2226; color: #949ca5; font-size: 12px; }
.gh-desc { margin-top: 10px; height: 108px; border: 1px solid #15181b; border-radius: 3px; background: #1d2226; color: #949ca5; font-size: 12px; padding: 4px 5px 8px; display: flex; flex-direction: column; justify-content: space-between; line-height: 17px; }
.gh-button { margin-top: 10px; height: 25px; border-radius: 3px; display: flex; justify-content: center; align-items: center; background: linear-gradient(90deg, #1450a5, #124696); color: #8f9fae; font-size: 12.200px; }
.gh-right { flex: 1; }

.finder { position: absolute; width: 770px; border-radius: 5px; overflow: hidden; background: #fff; display: flex; flex-direction: column; box-shadow: 0 0 1px rgba(0,0,0,.5), 0 9px 26px rgba(0,0,0,.38); }
.finder.back { left: 551px; top: 23px; height: 537px; }
.finder.front { left: 182px; top: 219px; height: 436px; }
.f-title { position: relative; height: 24px; flex: none; background: #f6f6f6; display: flex; align-items: center; justify-content: center; gap: 4px; padding-right: 4px; color: #a5a5a5; font-size: 13px; letter-spacing: -.07px; }
.f-title > svg { opacity: .7; margin-top: -2px; }
.f-title span { margin-top: -2px; }
.lights { position: absolute; left: 8px; top: 5px; display: flex; gap: 8px; }
.lights i { width: 12px; height: 12px; border-radius: 6px; background: #dcdcdc; border: 1px solid #cecece; }
.f-tools { height: 31px; flex: none; background: #f6f6f6; border-bottom: 1px solid #b2b2b2; display: flex; padding-left: 7px; }
.f-tools > div { height: 24px; border-radius: 4px; }
.nav { display: flex; width: 53px; }
.nav span { width: 27px; border: 1px solid #dadada; border-radius: 4px; display: flex; align-items: center; justify-content: center; padding-right: 2px; }
.nav span + span { margin-left: -1px; padding-right: 0; }
.views { display: flex; width: 112px; margin: 0 8px 0 76px; border: 1px solid #dadada; overflow: hidden; }
.views span { width: 27.300px; display: flex; align-items: center; justify-content: center; border-left: 1px solid #dadada; flex: none; }
.views span:first-child { width: 28px; border-left: 0; }
.views .on { background: #e3e3e3; }
.btn { width: 40px; margin-right: 6px; border: 1px solid #dadada; display: flex; align-items: center; justify-content: center; gap: 6px; }
.search { width: 245px; margin-left: 78px; border: 1px solid #dadada; display: flex; align-items: center; justify-content: center; gap: 5px; padding-right: 16px; color: #c8c8c8; }
.search svg { color: #a3a3a3; }
.f-body { flex: 1; min-height: 0; display: flex; overflow: hidden; }
aside { width: 133px; flex: none; background: #f6f6f6; border-right: 1px solid #dadada; }
.head { height: 28px; padding: 10px 0 0 9px; line-height: 18px; font-size: 11px; font-weight: 600; color: #7b7b7b; }
.head:first-child { height: 24px; padding-top: 6px; }
.item { height: 26px; padding-left: 18px; display: flex; align-items: center; color: #404040; font-size: 13px; letter-spacing: -.07px; -webkit-text-stroke: .15px; }
.item span { margin-left: 6px; }
.item.sel { background: #cecece; margin-right: -1px; }
.eject { margin-left: 15px; }
.col { flex: none; padding-top: 1px; border-right: 1px solid #dadada; }
.sliver { width: 22px; }
.sliver.low { width: 19px; padding-top: 2px; border-right: 0; }
.mid { width: 205px; }
.front .mid { width: 206px; padding-left: 1px; border-right: 1px solid #eee; }
.back .mid .row { margin-right: 1px; }
.wide { width: 205px; }
.row { height: 18px; border-bottom: 1px solid transparent; background-clip: padding-box; display: flex; align-items: center; color: #1d1d1d; font-size: 12px; padding-left: 6px; white-space: nowrap; }
.row.sel { background-color: #dcdcdc; }
.row.dim { color: #7d7d7d; }
.row.dim .ic { opacity: .55; }
.name { margin-left: 6px; -webkit-text-stroke: .1px; }
.front .name { letter-spacing: .53px; }
.tri { margin: 0 2px 1px auto; }
.sliver.low .tri { margin-right: 1px; }

.copy { position: absolute; left: 746px; top: 333px; width: 399px; height: 69px; border-radius: 5px; background: #ececec; box-shadow: 0 0 1px rgba(0,0,0,.5), 0 18px 32px rgba(0,0,0,.5), 0 4px 12px rgba(0,0,0,.14); }
.copy .lights i { background: #d0d0d0; border-color: #c0c0c0; }
.copy .lights .amber { background: #ffbd05; border-color: #e5a210; }
.copy-main { display: flex; padding: 22px 0 0 12px; }
.big { margin-top: 10px; }
.copy-text { margin-left: 12px; width: 308px; display: flex; flex-direction: column; }
.t { font-size: 11px; line-height: 15px; color: #151515; letter-spacing: .09px; }
.bar { margin: 4px 0 0 1px; height: 6px; border-radius: 3px; background: linear-gradient(90deg, #2196ff, #0b8cff 20%, #2496ff 45%, #5aafff 75%, #1990ff); }
.s { font-size: 9px; line-height: 12px; margin-top: 6px; color: #6c6c6c; }
.x { margin: 15px 0 0 9px; }

.dock { position: absolute; left: 112px; top: 691px; width: 1142px; height: 77px; padding: 0 4px; display: flex; border-radius: 5px 5px 0 0; background: radial-gradient(ellipse 120px 90px at 985px 75px, rgba(235,112,60,.65) 20%, rgba(190,112,92,0)), linear-gradient(90deg, #645657 0, #69585a 250px, #655b60 460px, #696573 590px, #687087 650px, #777b98 770px, #a5777e 820px, #e97843 865px, #f57940 900px, #f17943 965px, #bb7564 1020px, #817181 1080px, #6f6f88 1142px); }
.dock > svg { width: 65px; height: 77px; overflow: visible; }
.sep { width: 1px; height: 57px; margin: 10px 13px 0 15px; background: #b6512b; }
.mono { font: bold 13px "DejaVu Sans Mono", monospace; }
.huge { font: 300 64px Roboto, sans-serif; fill: #bcb8ba; text-anchor: middle; }
.tiny { font: 3.800px "Liberation Sans", sans-serif; fill: #d6e2fa; }
</style>
